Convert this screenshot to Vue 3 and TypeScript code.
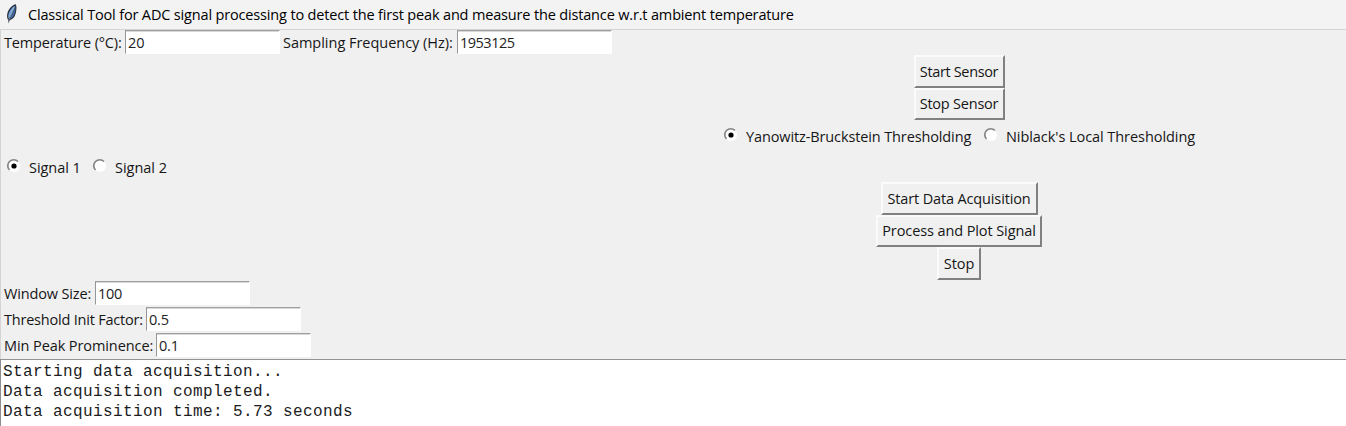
<script setup lang="ts">
import { ref } from 'vue'

interface Field { label: string; width: number; spacing: number; valueSpacing: number; value: string }
interface Action { label: string; width: number; spacing: number }
interface Choice { label: string; width: number; spacing: number }

const topFields = ref<Field[]>([
  { label: 'Temperature (°C):', width: 121, spacing: -0.15, valueSpacing: -0.1, value: '20' },
  { label: 'Sampling Frequency (Hz):', width: 174, spacing: -0.02, valueSpacing: -0.5, value: '1953125' },
])
const sensorActions: Action[] = [
  { label: 'Start Sensor', width: 91, spacing: -0.35 },
  { label: 'Stop Sensor', width: 91, spacing: -0.22 },
]
const methods: Choice[] = [
  { label: 'Yanowitz-Bruckstein Thresholding', width: 237, spacing: -0.12 },
  { label: "Niblack's Local Thresholding", width: 190, spacing: -0.06 },
]
const signals: Choice[] = [
  { label: 'Signal 1', width: 63, spacing: -0.05 },
  { label: 'Signal 2', width: 60, spacing: -0.02 },
]
const dataActions: Action[] = [
  { label: 'Start Data Acquisition', width: 157, spacing: -0.14 },
  { label: 'Process and Plot Signal', width: 166, spacing: -0.1 },
  { label: 'Stop', width: 44, spacing: -0.05 },
]
const params = ref<Field[]>([
  { label: 'Window Size:', width: 91, spacing: -0.15, valueSpacing: -0.3, value: '100' },
  { label: 'Threshold Init Factor:', width: 142, spacing: -0.21, valueSpacing: -0.2, value: '0.5' },
  { label: 'Min Peak Prominence:', width: 152, spacing: -0.09, valueSpacing: -0.2, value: '0.1' },
])
const method = ref(0)
const signal = ref(0)
const log = ['Starting data acquisition...', 'Data acquisition completed.', 'Data acquisition time: 5.73 seconds']
</script>

<template>
  <div class="window">
    <header class="titlebar">
      <svg class="feather" width="14" height="22" viewBox="0 0 14 22">
        <path d="M10.8 1.2C7.2 1.8 3.8 5.6 2.4 10.2c-.7 2.7-.4 5 .9 7.1l.4 3.1.9-3.2c3-.7 5.1-3.1 5.9-6.2.8-3 1.6-7 .3-9.8z" fill="#26303f" />
        <path d="M10 2.4C7.2 4 4.7 7.5 3.6 11c-.5 2-.5 3.3 0 4.4C5.6 12.4 8 7.4 10 2.4z" fill="#77a9df" />
        <path d="M10.3 3.4c.4 2.6-.3 5.4-1.2 8-.9 2.2-2.2 3.7-4.1 4.4 2.4-4 4-8.2 5.3-12.4z" fill="#3e6fae" />
        <path d="M9.6 3.6C7.9 8.3 5.8 12.7 3.8 16.8" fill="none" stroke="#c5d9ee" stroke-width=".6" />
      </svg>
      <span class="title">Classical Tool for ADC signal processing to detect the first peak and measure the distance w.r.t ambient temperature</span>
    </header>
    <main class="body">
      <div class="row top">
        <label v-for="f in topFields" :key="f.label" class="field">
          <span class="text" :style="{ width: f.width + 'px', letterSpacing: f.spacing + 'px' }">{{ f.label }}</span>
          <input v-model="f.value" class="entry" :style="{ letterSpacing: f.valueSpacing + 'px' }" />
        </label>
      </div>
      <div class="centered">
        <button v-for="a in sensorActions" :key="a.label" class="btn" :style="{ width: a.width + 'px', letterSpacing: a.spacing + 'px' }">{{ a.label }}</button>
      </div>
      <div class="row methods">
        <div v-for="(m, i) in methods" :key="m.label" class="choice" @click="method = i">
          <svg class="radio" width="16" height="16" viewBox="0 0 16 16">
            <circle cx="8" cy="8" r="6" fill="#fff" />
            <path d="M3.5 12A6 6 0 0 1 12 3.5" fill="none" stroke="#858585" stroke-width="1.7" />
            <circle v-if="method === i" cx="8" cy="8" r="2.6" fill="#000" />
          </svg>
          <span class="text" :style="{ width: m.width + 'px', letterSpacing: m.spacing + 'px' }">{{ m.label }}</span>
        </div>
      </div>
      <div class="row signals">
        <div v-for="(s, i) in signals" :key="s.label" class="choice" @click="signal = i">
          <svg class="radio" width="16" height="16" viewBox="0 0 16 16">
            <circle cx="8" cy="8" r="6" fill="#fff" />
            <path d="M3.5 12A6 6 0 0 1 12 3.5" fill="none" stroke="#858585" stroke-width="1.7" />
            <circle v-if="signal === i" cx="8" cy="8" r="2.6" fill="#000" />
          </svg>
          <span class="text" :style="{ width: s.width + 'px', letterSpacing: s.spacing + 'px' }">{{ s.label }}</span>
        </div>
      </div>
      <div class="centered">
        <button v-for="a in dataActions" :key="a.label" class="btn" :style="{ width: a.width + 'px', letterSpacing: a.spacing + 'px' }">{{ a.label }}</button>
      </div>
      <div class="params">
        <label v-for="p in params" :key="p.label" class="field">
          <span class="text" :style="{ width: p.width + 'px', letterSpacing: p.spacing + 'px' }">{{ p.label }}</span>
          <input v-model="p.value" class="entry" :style="{ letterSpacing: p.valueSpacing + 'px' }" />
        </label>
      </div>
    </main>
    <section class="log">
      <div v-for="line in log" :key="line" class="line">{{ line }}</div>
    </section>
  </div>
</template>

<style>
body { margin: 0; overflow: hidden; }
</style>

<style scoped>
.window {
  width: 1346px;
  height: 426px;
  display: flex;
  flex-direction: column;
  background: #f0f0f0;
  color: #161616;
  font: 14.5px/20px "Open Sans", "Noto Sans", sans-serif;
  overflow: hidden;
}
.titlebar {
  box-sizing: border-box;
  height: 30px;
  flex: none;
  display: flex;
  align-items: center;
  padding-left: 5px;
  background: #f3f3f3;
  border-bottom: 1px solid #d3d5d4;
}
.feather { flex: none; margin-top: -2px; }
.title {
  margin-left: 9px;
  color: #000;
  letter-spacing: -0.16px;
  white-space: nowrap;
}
.body {
  box-sizing: border-box;
  height: 329px;
  flex: none;
  border-left: 1px solid #d4d4d4;
}
.row { display: flex; }
.field { display: flex; align-items: center; height: 24px; }
.text { display: block; flex: none; padding-top: 2px; white-space: nowrap; }
.top { height: 25px; gap: 3px; padding-left: 3px; }
.top .field + .field .text { padding-right: 0; }
.entry {
  box-sizing: border-box;
  width: 155px;
  height: 24px;
  margin: 0;
  padding: 0 0 0 2px;
  border: 1px solid #fff;
  border-top: 1px solid #a0a0a0;
  border-left: 1px solid #969696;
  border-radius: 0;
  outline: 0;
  background: #fff;
  color: #222;
  font: inherit;
  box-shadow: inset 0 1px #d8d8d8;
}
.centered {
  display: flex;
  flex-direction: column;
  align-items: center;
  padding-left: 571px;
}
.btn {
  box-sizing: border-box;
  height: 32.5px;
  padding: 1px 0 0;
  border: 2px solid;
  border-color: #fbfbfb #808080 #808080 #fbfbfb;
  border-radius: 0;
  background: #f0f0f0;
  color: #161616;
  font: inherit;
  white-space: nowrap;
}
.methods { height: 31px; align-items: center; padding-left: 722px; }
.signals { height: 31px; align-items: center; padding-left: 5px; }
.choice { display: flex; align-items: center; }
.radio { flex: none; margin: -1px 7px 0 0; }
.params {
  display: flex;
  flex-direction: column;
  gap: 2.2px;
  padding: 1.5px 0 0 3px;
}
.log {
  box-sizing: border-box;
  flex: 1;
  padding: 2px 0 0 2px;
  border-top: 1px solid #929292;
  border-left: 1px solid #8c8c8c;
  background: #fff;
  color: #1c1c1c;
  font: 16px/20px "Liberation Mono", monospace;
  letter-spacing: 0.4px;
}
.line { white-space: pre; }
</style>
